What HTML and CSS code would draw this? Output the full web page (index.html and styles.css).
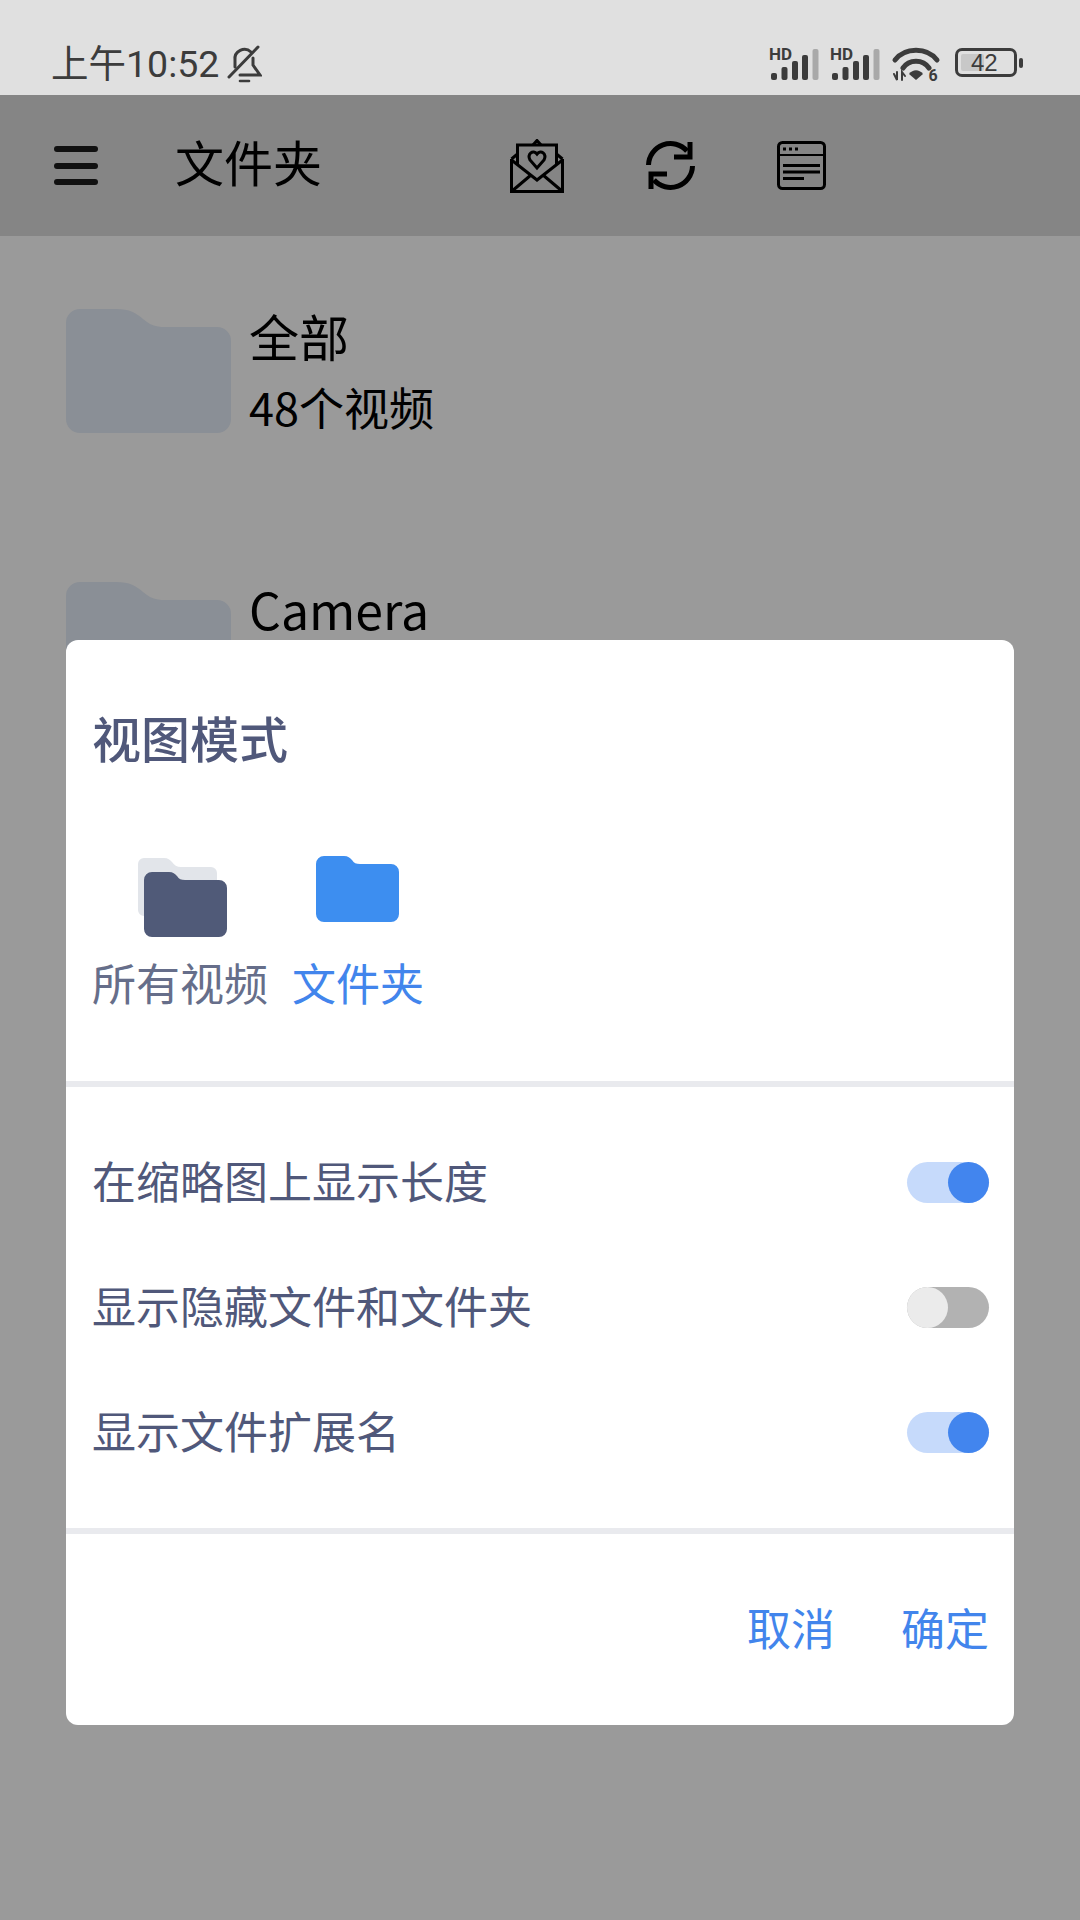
FILE: index.html
```html
<!DOCTYPE html>
<html lang="zh-CN">
<head>
    <meta charset="UTF-8">
    <title>文件夹</title>
    <link rel="stylesheet" href="styles.css">
</head>
<body>
    <div class="status-bar">
        <span class="time">上午10:52</span>
        <svg class="bell" width="35" height="38" viewBox="0 0 35 38" fill="none" stroke="#3c3c3c" stroke-width="3" stroke-linecap="round">
            <path d="M8 22 V15 A9.5 9.5 0 0 1 24 7"/>
            <path d="M26 13 V20 L33 30 H13"/>
            <path d="M2 32 L31 2"/>
            <path d="M13 36 H22" stroke-width="2.6"/>
        </svg>
        <div class="status-icons">
            <svg class="signal" width="48" height="32" viewBox="0 0 48 32">
                <text x="-2" y="12" class="hd">HD</text>
                <rect x="0" y="25" width="6" height="7" rx="2" fill="#3c3c3c"/>
                <rect x="10.5" y="19" width="6" height="13" rx="2" fill="#3c3c3c"/>
                <rect x="21" y="13" width="6" height="19" rx="2" fill="#3c3c3c"/>
                <rect x="31" y="7" width="6" height="25" rx="2" fill="#3c3c3c"/>
                <rect x="41.5" y="1" width="6" height="31" rx="2" fill="#a9a9a9"/>
            </svg>
            <svg class="signal" width="48" height="32" viewBox="0 0 48 32">
                <text x="-2" y="12" class="hd">HD</text>
                <rect x="0" y="25" width="6" height="7" rx="2" fill="#3c3c3c"/>
                <rect x="10.5" y="19" width="6" height="13" rx="2" fill="#3c3c3c"/>
                <rect x="21" y="13" width="6" height="19" rx="2" fill="#3c3c3c"/>
                <rect x="31" y="7" width="6" height="25" rx="2" fill="#3c3c3c"/>
                <rect x="41.5" y="1" width="6" height="31" rx="2" fill="#a9a9a9"/>
            </svg>
            <svg class="wifi" width="46" height="34" viewBox="0 0 46 34" fill="none" stroke="#3c3c3c" stroke-linecap="round">
                <path d="M2 13 C12 0 34 0 44 13" stroke-width="5"/>
                <path d="M10 21 C16 12 30 12 36 21" stroke-width="5"/>
                <path d="M16 27 C20 22 26 22 30 27 L23 33 Z" fill="#3c3c3c" stroke="none"/>
                <path d="M1 27 L4 33 L4 25 M9 33 V25 L12 29" stroke-width="2"/>
                <text x="35.5" y="34" class="wifi-six">6</text>
            </svg>
            <div class="battery">
                <div class="battery-body">
                    <span class="battery-fill"></span>
                    <span class="battery-num">42</span>
                </div>
                <span class="battery-cap"></span>
            </div>
        </div>
    </div>

    <div class="toolbar">
        <div class="menu-icon">
            <span></span>
            <span></span>
            <span></span>
        </div>
        <div class="toolbar-title">文件夹</div>
        <div class="toolbar-icons">
            <svg width="54" height="54" viewBox="0 0 54 54" fill="none" stroke="#000" stroke-width="3">
                <path d="M1.5 20 V52.5 H52.5 V20"/>
                <path d="M1.5 20 L7.5 15 M52.5 20 L46.5 15"/>
                <path d="M7.5 25 V6 H46.5 V25"/>
                <path d="M23 6 L27 1.5 L31 6"/>
                <path d="M1.5 21 L27 41 L52.5 21"/>
                <path d="M1.5 52.5 L21 36 M52.5 52.5 L33 36"/>
                <path d="M27 29 L20 21 C17 15 23 10 27 15 C31 10 37 15 34 21 Z"/>
            </svg>
            <svg width="49" height="49" viewBox="0 0 49 49" fill="none" stroke="#000" stroke-width="5">
                <path d="M2.5 24 A22 22 0 0 1 41 10"/>
                <path d="M44 1 V16 H28"/>
                <path d="M46.5 25 A22 22 0 0 1 8 39"/>
                <path d="M5 48 V33 H21"/>
            </svg>
            <svg width="49" height="49" viewBox="0 0 49 49" fill="none" stroke="#000" stroke-width="3">
                <rect x="1.5" y="1.5" width="46" height="46" rx="4"/>
                <path d="M2 14 H47" stroke-width="2"/>
                <path d="M6 8 H9 M12 8 H15 M18 8 H21" stroke-width="3"/>
                <path d="M6 24.5 H43 M6 31 H43 M6 37.5 H27"/>
            </svg>
        </div>
    </div>

    <div class="folder-list">
        <div class="folder-row">
            <svg class="folder-thumb" width="165" height="124" viewBox="0 0 165 124">
                <path d="M14 0 H50 C64 0 70 4 77 10 C84 16 90 18 98 18 H151 A14 14 0 0 1 165 32 V110 A14 14 0 0 1 151 124 H14 A14 14 0 0 1 0 110 V14 A14 14 0 0 1 14 0 Z" fill="#8a8f96"/>
            </svg>
            <div class="folder-info">
                <div class="folder-name">全部</div>
                <div class="folder-count">48个视频</div>
            </div>
        </div>
        <div class="folder-row">
            <svg class="folder-thumb" width="165" height="124" viewBox="0 0 165 124">
                <path d="M14 0 H50 C64 0 70 4 77 10 C84 16 90 18 98 18 H151 A14 14 0 0 1 165 32 V110 A14 14 0 0 1 151 124 H14 A14 14 0 0 1 0 110 V14 A14 14 0 0 1 14 0 Z" fill="#8a8f96"/>
            </svg>
            <div class="folder-info">
                <div class="folder-name">Camera</div>
                <div class="folder-count"></div>
            </div>
        </div>
    </div>

    <div class="dialog">
        <div class="dialog-title">视图模式</div>
        <div class="view-modes">
            <div class="view-mode">
                <div class="view-icon view-icon-all">
                    <svg width="89" height="81" viewBox="0 0 89 81">
                        <path d="M6 2 H26 C30 2 32 4 34 6 C36 9 39 11 43 11 H73 A6 6 0 0 1 79 17 V54 A6 6 0 0 1 73 60 H6 A6 6 0 0 1 0 54 V8 A6 6 0 0 1 6 2 Z" fill="#e2e5ea"/>
                        <path d="M14 16 H31 C35 16 37 18 39 20 C41 23 43 24 47 24 H81 A8 8 0 0 1 89 32 V73 A8 8 0 0 1 81 81 H14 A8 8 0 0 1 6 73 V24 A8 8 0 0 1 14 16 Z" fill="#505a78"/>
                    </svg>
                </div>
                <div class="view-label">所有视频</div>
            </div>
            <div class="view-mode view-mode-active">
                <div class="view-icon view-icon-folder">
                    <svg width="83" height="66" viewBox="0 0 83 66">
                        <path d="M8 0 H28 C32 0 34 2 36 4 C38 7 40 8 44 8 H75 A8 8 0 0 1 83 16 V58 A8 8 0 0 1 75 66 H8 A8 8 0 0 1 0 58 V8 A8 8 0 0 1 8 0 Z" fill="#3d8ef0"/>
                    </svg>
                </div>
                <div class="view-label">文件夹</div>
            </div>
        </div>
        <div class="divider"></div>
        <div class="settings">
            <div class="setting-row">
                <span class="setting-text">在缩略图上显示长度</span>
                <span class="toggle toggle-on"></span>
            </div>
            <div class="setting-row">
                <span class="setting-text">显示隐藏文件和文件夹</span>
                <span class="toggle"></span>
            </div>
            <div class="setting-row">
                <span class="setting-text">显示文件扩展名</span>
                <span class="toggle toggle-on"></span>
            </div>
        </div>
        <div class="divider"></div>
        <div class="dialog-actions">
            <span class="action-text">取消</span>
            <span class="action-text">确定</span>
        </div>
    </div>
</body>
</html>
```

FILE: styles.css
```css
body {
    font-family: "Noto Sans CJK SC", "Noto Sans", sans-serif;
    background-color: #9a9a9a;
    margin: 0;
    padding: 0;
    width: 1080px;
    height: 1920px;
    overflow: hidden;
    position: relative;
}
.status-bar {
    height: 95px;
    background-color: #e0e0e0;
    display: flex;
    align-items: flex-start;
    box-sizing: border-box;
    padding: 45px 0 0 51px;
    color: #3c3c3c;
}
.time {
    font-family: Roboto, "Noto Sans CJK SC", sans-serif;
    font-size: 37.5px;
    line-height: 38px;
}
.bell {
    margin-left: 8px;
}
.status-icons {
    margin-left: auto;
    display: flex;
    align-items: flex-start;
    padding-right: 57px;
}
.signal {
    margin-top: 3px;
    margin-right: 12px;
    overflow: visible;
}
.signal:first-child {
    margin-right: 13px;
}
.hd {
    font-family: Roboto, sans-serif;
    font-weight: 700;
    font-size: 17px;
    fill: #3c3c3c;
}
.wifi {
    margin-top: 2px;
    margin-left: 1px;
    overflow: visible;
}
.wifi-six {
    font-family: Roboto, sans-serif;
    font-weight: 700;
    font-size: 16px;
    fill: #3c3c3c;
    stroke: none;
}
.battery {
    display: flex;
    align-items: center;
    margin-left: 16px;
    margin-top: 3px;
}
.battery-body {
    width: 62px;
    height: 29px;
    box-sizing: border-box;
    border: 3px solid #3c3c3c;
    border-radius: 7px;
    position: relative;
    padding: 3px;
    display: flex;
}
.battery-fill {
    width: 23px;
    background-color: #c8c8c8;
    border-radius: 2px;
}
.battery-num {
    position: absolute;
    left: 13px;
    top: -3px;
    font-family: "Liberation Sans", sans-serif;
    font-size: 24px;
    line-height: 29px;
}
.battery-cap {
    width: 4px;
    height: 10px;
    margin-left: 2px;
    background-color: #3c3c3c;
    border-radius: 2px;
}
.toolbar {
    height: 141px;
    background-color: #858585;
    display: flex;
    align-items: center;
    padding-left: 54px;
}
.menu-icon {
    width: 44px;
    display: flex;
    flex-direction: column;
    gap: 10.5px;
}
.menu-icon span {
    height: 6px;
    background-color: #111;
    border-radius: 3px;
}
.toolbar-title {
    margin-left: 77px;
    margin-bottom: 10px;
    font-size: 49px;
    line-height: 60px;
    width: 146px;
    white-space: nowrap;
    color: #000;
}
.toolbar-icons {
    margin-left: 189px;
    display: flex;
    align-items: center;
    gap: 82px;
}
.folder-list {
    padding: 61px 0 0 66px;
}
.folder-row {
    display: flex;
    align-items: center;
    gap: 18px;
    margin-bottom: 125px;
}
.folder-info {
    padding: 3px 0;
}
.folder-name {
    font-size: 50px;
    line-height: 71px;
    color: #000;
}
.folder-count {
    font-size: 45px;
    line-height: 71px;
    height: 71px;
    color: #000;
}
.dialog {
    position: absolute;
    left: 66px;
    top: 640px;
    width: 948px;
    height: 1085px;
    background-color: #fff;
    border-radius: 12px;
    color: #50587a;
}
.dialog-title {
    margin: 67px 0 0 26px;
    font-size: 49px;
    line-height: 60px;
    font-weight: 500;
}
.view-modes {
    display: flex;
    gap: 24px;
    padding: 89px 0 0 26px;
    margin-bottom: 69px;
}
.view-mode {
    display: flex;
    flex-direction: column;
    align-items: center;
}
.view-icon {
    height: 81px;
    margin-bottom: 15px;
}
.view-icon-all {
    padding-left: 5px;
}
.view-icon-folder {
    padding-right: 2px;
}
.view-label {
    font-size: 44px;
    line-height: 60px;
    color: #666e8a;
}
.view-mode-active .view-label {
    color: #4285ec;
}
.divider {
    height: 6px;
    background-color: #e9eaee;
}
.settings {
    padding: 33px 25px 33px 26px;
}
.setting-row {
    height: 125px;
    display: flex;
    align-items: center;
    justify-content: space-between;
    font-size: 44px;
}
.setting-text {
    padding-bottom: 6px;
}
.toggle {
    width: 82px;
    height: 41px;
    border-radius: 21px;
    background-color: #b2b2b2;
    display: flex;
    justify-content: flex-start;
}
.toggle::before {
    content: "";
    width: 41px;
    height: 41px;
    border-radius: 50%;
    background-color: #ebebeb;
}
.toggle-on {
    background-color: #c6dafb;
    justify-content: flex-end;
}
.toggle-on::before {
    background-color: #4285ee;
}
.dialog-actions {
    height: 191px;
    display: flex;
    align-items: center;
    justify-content: flex-end;
    gap: 66px;
    padding-right: 25px;
    font-size: 44px;
    color: #4285ec;
}
.action-text {
    padding-bottom: 6px;
}
```
